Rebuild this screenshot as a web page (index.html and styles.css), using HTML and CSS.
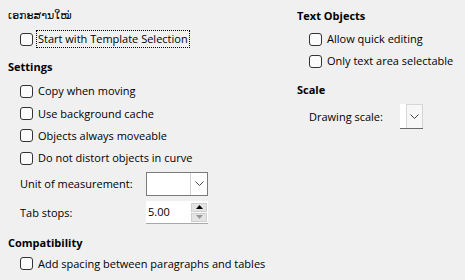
FILE: index.html
```html
<!DOCTYPE html>
<html lang="lo">
<head>
    <meta charset="UTF-8">
    <title>Options - General</title>
    <link rel="stylesheet" href="styles.css">
</head>
<body>
    <div class="page">
        <div class="column left">
            <div class="section">
                <div class="section-title lao">ເອກະສານໃໝ່</div>
                <div class="section-body">
                    <label class="check"><span class="box"></span><span class="text focused">Start with Template Selection</span></label>
                </div>
            </div>

            <div class="section settings">
                <div class="section-title">Settings</div>
                <div class="section-body">
                    <label class="check"><span class="box"></span><span class="text">Copy when moving</span></label>
                    <label class="check"><span class="box"></span><span class="text">Use background cache</span></label>
                    <label class="check"><span class="box"></span><span class="text">Objects always moveable</span></label>
                    <label class="check"><span class="box"></span><span class="text">Do not distort objects in curve</span></label>

                    <div class="field-row unit-row">
                        <span class="field-label">Unit of measurement:</span>
                        <div class="combo">
                            <span class="combo-value"></span>
                            <span class="combo-button">
                                <svg width="9" height="5" viewBox="0 0 9 5"><path d="M0.5 0.5 L4.5 4.5 L8.5 0.5" fill="none" stroke="#444" stroke-width="1"/></svg>
                            </span>
                        </div>
                    </div>

                    <div class="field-row tab-row">
                        <span class="field-label">Tab stops:</span>
                        <div class="spin">
                            <span class="spin-value">5.00</span>
                            <span class="spin-buttons">
                                <span class="spin-up"><svg width="7" height="4" viewBox="0 0 7 4"><path d="M0 4 L3.5 0 L7 4 Z" fill="#000"/></svg></span>
                                <span class="spin-down"><svg width="7" height="4" viewBox="0 0 7 4"><path d="M0 0 L3.5 4 L7 0 Z" fill="#999"/></svg></span>
                            </span>
                        </div>
                    </div>
                </div>
            </div>

            <div class="section compat">
                <div class="section-title">Compatibility</div>
                <div class="section-body">
                    <label class="check"><span class="box"></span><span class="text">Add spacing between paragraphs and tables</span></label>
                </div>
            </div>
        </div>

        <div class="column right">
            <div class="section">
                <div class="section-title">Text Objects</div>
                <div class="section-body">
                    <label class="check"><span class="box"></span><span class="text">Allow quick editing</span></label>
                    <label class="check"><span class="box"></span><span class="text">Only text area selectable</span></label>
                </div>
            </div>

            <div class="section scale">
                <div class="section-title">Scale</div>
                <div class="section-body">
                    <div class="field-row scale-row">
                        <span class="field-label">Drawing scale:</span>
                        <div class="mini-combo">
                            <span class="mini-value"></span>
                            <span class="mini-button">
                                <svg width="9" height="5" viewBox="0 0 9 5"><path d="M0.5 0.5 L4.5 4.5 L8.5 0.5" fill="none" stroke="#444" stroke-width="1"/></svg>
                            </span>
                        </div>
                    </div>
                </div>
            </div>
        </div>
    </div>
</body>
</html>
```

FILE: styles.css
```css
html, body {
    margin: 0;
    padding: 0;
    background: #f0f0f0;
}

body {
    font-family: 'Open Sans', 'Noto Sans', 'DejaVu Sans', sans-serif;
    font-size: 11px;
    color: #000;
}

.page {
    display: grid;
    grid-template-columns: 289px 1fr;
    padding: 7px 8px 0 8px;
}

.section + .section {
    margin-top: 8px;
}

.section.compat {
    margin-top: 10px;
}

.section.scale {
    margin-top: 9px;
}

.section-title {
    font-weight: 700;
    height: 18px;
    line-height: 18px;
}

.section-title.lao {
    font-weight: 400;
    font-family: 'DejaVu Sans', 'Noto Sans', sans-serif;
    font-size: 11px;
}

.section-body {
    padding-left: 12px;
    padding-top: 3px;
}

.settings .section-body {
    padding-top: 4px;
}

.compat .section-body {
    padding-top: 1px;
}

.check {
    display: flex;
    align-items: center;
    height: 22px;
}

.settings .check {
    height: 22.4px;
}

.box {
    width: 11px;
    height: 11px;
    border: 1px solid #333;
    border-radius: 3px;
    background: #fbfbfb;
    margin-right: 4px;
    flex-shrink: 0;
}

.text {
    white-space: nowrap;
    line-height: 16px;
    padding: 0 1px;
    border: 1px solid transparent;
    margin-left: -1px;
}

.text.focused {
    border: 1px dotted #000;
}

.field-row {
    display: flex;
    align-items: center;
}

.field-label {
    white-space: nowrap;
}

.unit-row {
    margin-top: 2px;
}

.unit-row .field-label,
.tab-row .field-label {
    width: 126px;
}

.combo {
    display: flex;
    width: 60px;
    height: 22px;
    border: 1px solid #7a7a7a;
    background: #fff;
}

.combo-value {
    flex: 1;
}

.combo-button {
    width: 16px;
    border-left: 1px solid #d0d0d0;
    display: flex;
    align-items: center;
    justify-content: center;
}

.tab-row {
    margin-top: 5px;
}

.spin {
    display: flex;
    width: 62px;
    height: 22px;
    background: #fff;
    border-bottom: 1px solid #aaa;
}

.spin-value {
    flex: 1;
    line-height: 22px;
    padding-left: 2px;
}

.spin-buttons {
    width: 16px;
    display: flex;
    flex-direction: column;
    padding: 2px 1px 1px 0;
    gap: 1px;
}

.spin-up, .spin-down {
    flex: 1;
    display: flex;
    align-items: center;
    justify-content: center;
    background: #e4e4e4;
    border: 1px solid #cfcfcf;
}

.scale-row {
    margin-top: 2px;
}

.scale-row .field-label {
    width: 91px;
}

.mini-combo {
    display: flex;
    height: 24px;
    border-bottom: 1px solid #6a6a6a;
}

.mini-value {
    width: 6px;
    background: #fff;
}

.mini-button {
    width: 15px;
    border: 1px solid #d6d6d6;
    border-bottom: none;
    background: #f7f7f7;
    display: flex;
    align-items: center;
    justify-content: center;
}
```
